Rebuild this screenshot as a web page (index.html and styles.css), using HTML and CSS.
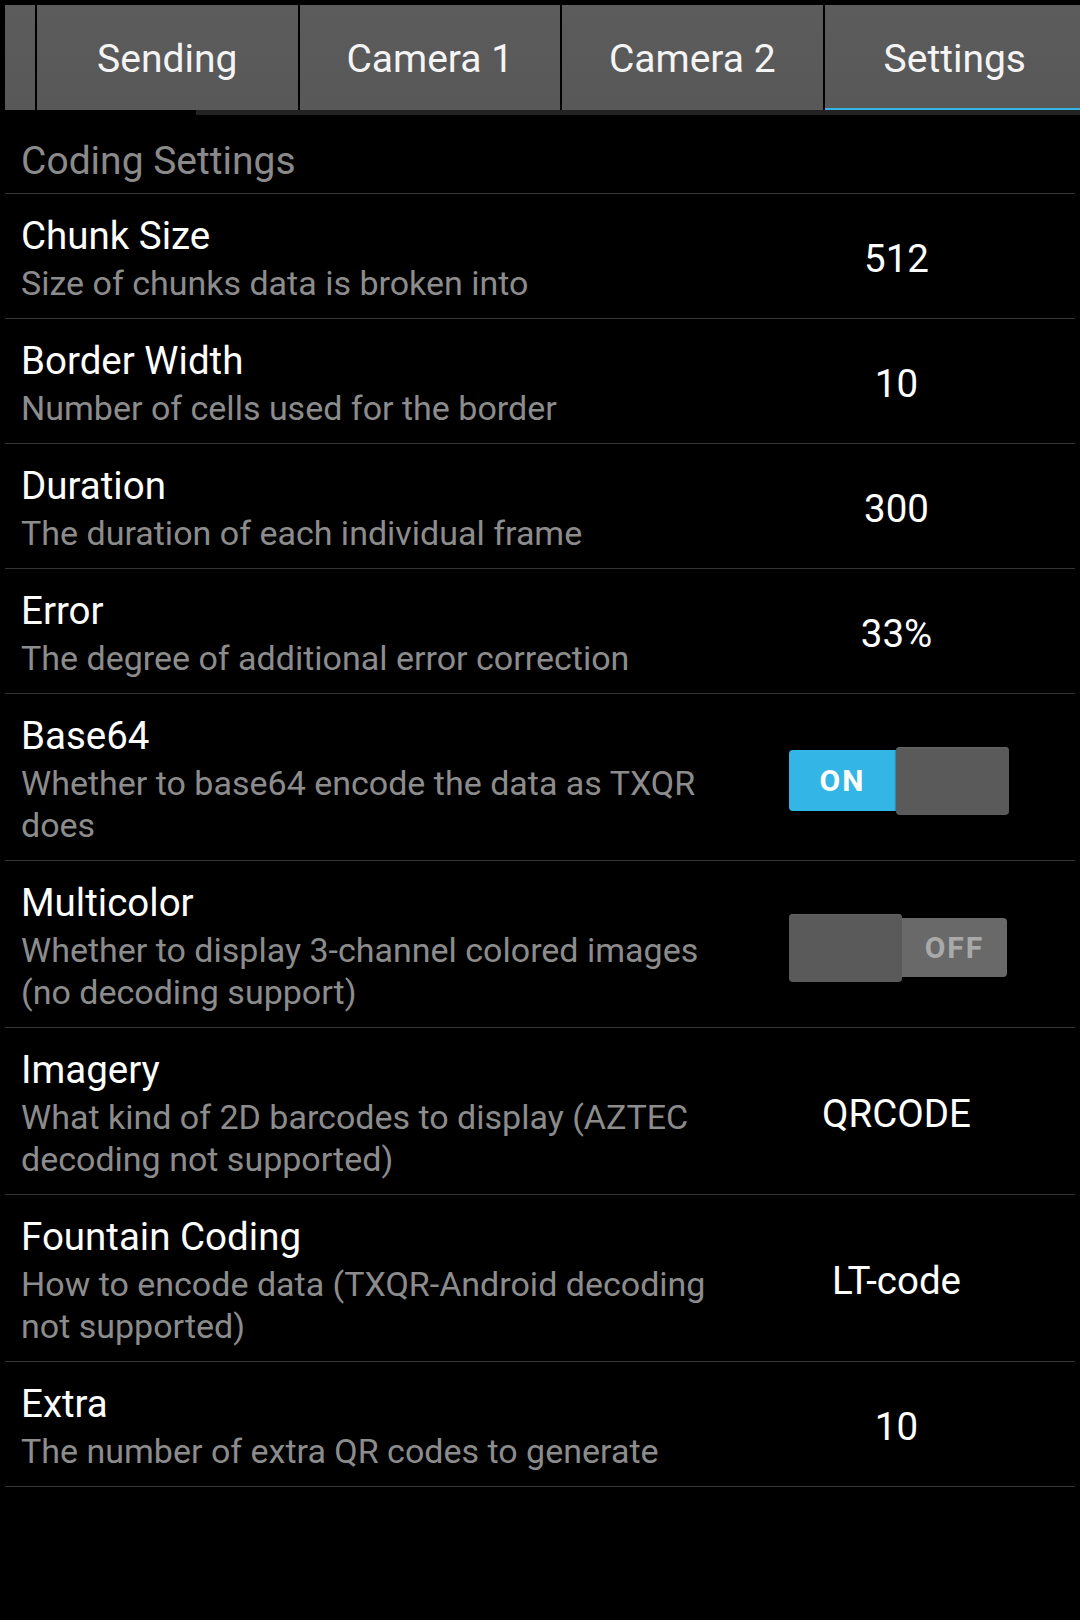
FILE: index.html
```html
<!DOCTYPE html>
<html lang="en">
<head>
<meta charset="utf-8">
<title>Settings</title>
<link rel="stylesheet" href="styles.css">
</head>
<body>
<div class="tabbar">
  <div class="tab-row">
    <div class="tab tab-hidden"></div>
    <div class="tab">Sending</div>
    <div class="tab">Camera 1</div>
    <div class="tab">Camera 2</div>
    <div class="tab tab-selected">Settings</div>
  </div>
  <div class="tab-shelf"></div>
</div>

<div class="list">
  <div class="section-header">Coding Settings</div>

  <div class="row">
    <div class="row-text">
      <div class="row-title">Chunk Size</div>
      <div class="row-desc">Size of chunks data is broken into</div>
    </div>
    <div class="row-value">512</div>
  </div>

  <div class="row">
    <div class="row-text">
      <div class="row-title">Border Width</div>
      <div class="row-desc">Number of cells used for the border</div>
    </div>
    <div class="row-value">10</div>
  </div>

  <div class="row">
    <div class="row-text">
      <div class="row-title">Duration</div>
      <div class="row-desc">The duration of each individual frame</div>
    </div>
    <div class="row-value">300</div>
  </div>

  <div class="row">
    <div class="row-text">
      <div class="row-title">Error</div>
      <div class="row-desc">The degree of additional error correction</div>
    </div>
    <div class="row-value">33%</div>
  </div>

  <div class="row">
    <div class="row-text">
      <div class="row-title">Base64</div>
      <div class="row-desc">Whether to base64 encode the data as TXQR does</div>
    </div>
    <div class="row-value">
      <div class="switch switch-on">
        <span class="switch-label">ON</span>
        <span class="switch-thumb"></span>
      </div>
    </div>
  </div>

  <div class="row">
    <div class="row-text">
      <div class="row-title">Multicolor</div>
      <div class="row-desc">Whether to display 3-channel colored images (no decoding support)</div>
    </div>
    <div class="row-value">
      <div class="switch switch-off">
        <span class="switch-thumb"></span>
        <span class="switch-label">OFF</span>
      </div>
    </div>
  </div>

  <div class="row">
    <div class="row-text">
      <div class="row-title">Imagery</div>
      <div class="row-desc">What kind of 2D barcodes to display (AZTEC decoding not supported)</div>
    </div>
    <div class="row-value">QRCODE</div>
  </div>

  <div class="row">
    <div class="row-text">
      <div class="row-title">Fountain Coding</div>
      <div class="row-desc">How to encode data (TXQR-Android decoding not supported)</div>
    </div>
    <div class="row-value">LT-code</div>
  </div>

  <div class="row">
    <div class="row-text">
      <div class="row-title">Extra</div>
      <div class="row-desc">The number of extra QR codes to generate</div>
    </div>
    <div class="row-value">10</div>
  </div>
</div>
</body>
</html>
```

FILE: styles.css
```css
html, body {
  margin: 0;
  padding: 0;
  background: #000;
}

body {
  font-family: Roboto, "Noto Sans", "Liberation Sans", sans-serif;
  color: #fff;
  width: 1080px;
  min-height: 1620px;
  overflow: hidden;
}

/* ---------- Tabs ---------- */
.tabbar {
  padding-top: 5px;
  background: #000;
}

.tab-row {
  display: flex;
  gap: 2px;
  height: 105px;
  margin-left: 5px;
  overflow: hidden;
  background: #000;
}

.tab {
  flex: 0 0 260.5px;
  height: 105px;
  padding-top: 4px;
  background: linear-gradient(#5c5c5c, #585858);
  color: #f4f4f4;
  font-size: 39px;
  line-height: 101px;
  text-align: center;
  box-sizing: border-box;
}

.tab-hidden {
  margin-left: -230.5px;
}

.tab-selected {
  box-shadow: inset 0 -2px 0 #33b5e5;
}

.tab-shelf {
  height: 5px;
  margin-left: 196px;
  background: #232323;
}

/* ---------- List ---------- */
.list {
  margin: 0 5px;
}

.section-header {
  padding: 24px 0 10px 16px;
  font-size: 39px;
  line-height: 44px;
  color: #8a8a8a;
  border-bottom: 1px solid #333;
}

.row {
  display: flex;
  align-items: center;
  border-bottom: 1px solid #333;
}

.row-text {
  flex: 1;
  padding: 16px 0 14px 16px;
  min-width: 0;
}

.row-title {
  font-size: 38.5px;
  line-height: 52px;
  color: #fff;
}

.row-desc {
  font-size: 34px;
  line-height: 42px;
  color: #8c8c8c;
}

.row-value {
  flex: 0 0 357px;
  display: flex;
  justify-content: center;
  align-items: center;
  padding-top: 4px;
  font-size: 38.5px;
  color: #fff;
}

/* ---------- Switch ---------- */
.switch {
  display: flex;
  align-items: center;
  width: 220px;
  height: 68px;
  margin: 3px 0 0 5px;
}

.switch-label {
  font-family: Roboto, "Liberation Sans", sans-serif;
  font-weight: 700;
  font-size: 30px;
  letter-spacing: 2px;
  display: flex;
  align-items: center;
  justify-content: center;
}

.switch-thumb {
  flex: 0 0 113px;
  height: 68px;
  border-radius: 4px;
  background: #5a5a5a;
  box-shadow: 0 1px 2px rgba(0, 0, 0, 0.8), inset 0 1px 0 #636363;
}

.switch-on .switch-label {
  flex: 0 0 107px;
  height: 61px;
  background: #33b5e5;
  color: #fff;
  border-radius: 4px 0 0 4px;
}

.switch-off .switch-label {
  flex: 0 0 105px;
  height: 59px;
  background: #696969;
  color: #a9a9a9;
  border-radius: 0 4px 4px 0;
}
```
